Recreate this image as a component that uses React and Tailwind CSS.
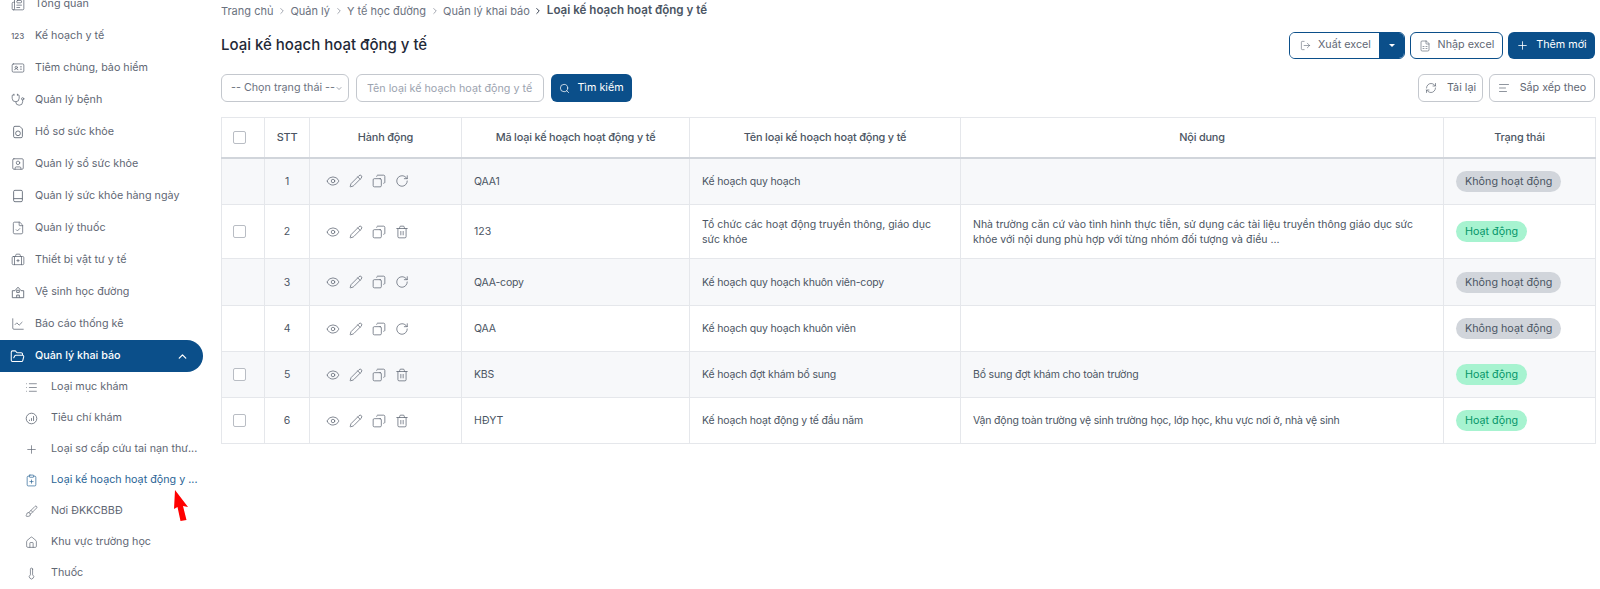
import { Stethoscope, ChevronUp, ChevronDown, ChevronRight, Plus, Search, Eye, Pencil, Copy, RotateCw, Trash2, LogOut, FileSpreadsheet, RefreshCw, AlignLeft, FolderOpen, ChartLine, BriefcaseMedical, FileCheck, SquareUser, Newspaper, List, ClipboardPlus, Brush, House, Thermometer, IdCard } from 'lucide-react'

// a few menu icons have no close match in the package
const FileCircle = ({ size }) => (
  <svg width={size} height={size} viewBox="0 0 16 16" fill="none" stroke="currentColor" strokeWidth="1" strokeLinejoin="round">
    <path d="M3 3a1.5 1.5 0 0 1 1.5-1.5H10L13 4.5V13a1.5 1.5 0 0 1-1.5 1.5h-7A1.5 1.5 0 0 1 3 13Z" />
    <circle cx="8" cy="9.5" r="2.7" />
  </svg>
)

const PlainBook = ({ size }) => (
  <svg width={size} height={size} viewBox="0 0 16 16" fill="none" stroke="currentColor" strokeWidth="1">
    <rect x="3" y="1.5" width="10" height="13" rx="1.5" />
    <path d="M3 11h10" />
  </svg>
)

const SchoolBox = ({ size }) => (
  <svg width={size} height={size} viewBox="0 0 16 16" fill="none" stroke="currentColor" strokeWidth="1" strokeLinejoin="round">
    <path d="M1.5 14.5V6.5h3M14.5 14.5V6.5h-3M4.5 6.5 8 2.5l3.5 4M1.5 14.5h13" />
    <rect x="6.5" y="6" width="3" height="2.5" />
    <path d="M6.5 14.5v-3h3v3" />
  </svg>
)

const CircleChart = ({ size }) => (
  <svg width={size} height={size} viewBox="0 0 16 16" fill="none" stroke="currentColor" strokeWidth="1">
    <circle cx="8" cy="8" r="6.5" />
    <path d="M5.5 11V9.5M8 11V7.5M10.5 11V5" />
  </svg>
)

const menu = [
  { label: 'Tổng quan', icon: Newspaper },
  { label: 'Kế hoạch y tế', text: '123' },
  { label: 'Tiêm chủng, bảo hiểm', icon: IdCard },
  { label: 'Quản lý bệnh', icon: Stethoscope },
  { label: 'Hồ sơ sức khỏe', icon: FileCircle },
  { label: 'Quản lý sổ sức khỏe', icon: SquareUser },
  { label: 'Quản lý sức khỏe hàng ngày', icon: PlainBook },
  { label: 'Quản lý thuốc', icon: FileCheck },
  { label: 'Thiết bị vật tư y tế', icon: BriefcaseMedical },
  { label: 'Vệ sinh học đường', icon: SchoolBox },
  { label: 'Báo cáo thống kê', icon: ChartLine },
]

const subMenu = [
  { label: 'Loại mục khám', icon: List },
  { label: 'Tiêu chí khám', icon: CircleChart },
  { label: 'Loại sơ cấp cứu tai nạn thư...', icon: Plus },
  { label: 'Loại kế hoạch hoạt động y ...', icon: ClipboardPlus, active: true },
  { label: 'Nơi ĐKKCBBĐ', icon: Brush },
  { label: 'Khu vực trường học', icon: House },
  { label: 'Thuốc', icon: Thermometer },
]

const rows = [
  { id: 1, ma: 'QAA1', ten: 'Kế hoạch quy hoạch', noiDung: '', on: false, h: 'h-[47px]' },
  { id: 2, ma: '123', ten: 'Tổ chức các hoạt động truyền thông, giáo dục sức khỏe', noiDung: 'Nhà trường căn cứ vào tình hình thực tiễn, sử dụng các tài liệu truyền thông giáo dục sức khỏe với nội dung phù hợp với từng nhóm đối tượng và điều ...', on: true, h: 'h-[54px] tracking-normal' },
  { id: 3, ma: 'QAA-copy', ten: 'Kế hoạch quy hoạch khuôn viên-copy', noiDung: '', on: false, h: 'h-[47px]' },
  { id: 4, ma: 'QAA', ten: 'Kế hoạch quy hoạch khuôn viên', noiDung: '', on: false, h: 'h-[46px]' },
  { id: 5, ma: 'KBS', ten: 'Kế hoạch đợt khám bổ sung', noiDung: 'Bổ sung đợt khám cho toàn trường', on: true, h: 'h-[46px]' },
  { id: 6, ma: 'HĐYT', ten: 'Kế hoạch hoạt động y tế đầu năm', noiDung: 'Vận động toàn trường vệ sinh trường học, lớp học, khu vực nơi ở, nhà vệ sinh', on: true, h: 'h-[46px]' },
]

function Sidebar() {
  return (
    <aside className="w-[203px] shrink-0 -mt-[12px] text-[10.75px] text-[#5f6774]">
      {menu.map(({ label, icon: Icon, text }) => (
        <div key={label} className="h-[32px] flex items-center pl-[11px]">
          <span className="w-[24px] shrink-0 flex items-center">
            {Icon ? <Icon size={14} strokeWidth={1.3} /> : <span className="text-[8px] font-medium">{text}</span>}
          </span>
          {label}
        </div>
      ))}
      <div className="h-[32px] flex items-center pl-[10px] pr-[14px] bg-[#0b4f8a] rounded-r-full text-white font-medium">
        <span className="w-[25px] shrink-0"><FolderOpen size={15} strokeWidth={1.7} /></span>
        <span className="flex-1">Quản lý khai báo</span>
        <ChevronUp size={13} strokeWidth={2.4} />
      </div>
      {subMenu.map(({ label, icon: Icon, active }) => (
        <div key={label} className={`h-[31px] flex items-center pl-[25px] whitespace-nowrap ${active ? 'text-[#2b6596]' : ''}`}>
          <span className="w-[26px] shrink-0"><Icon size={13} strokeWidth={1.3} /></span>
          {label}
        </div>
      ))}
    </aside>
  )
}

function Breadcrumb() {
  const items = ['Trang chủ', 'Quản lý', 'Y tế học đường', 'Quản lý khai báo']
  return (
    <div className="flex items-center h-[22px] text-[11px] text-[#6b7280]">
      {items.map((item, i) => (
        <span key={item} className="flex items-center">
          {item}
          <ChevronRight size={10} strokeWidth={i === 3 ? 2.4 : 1.5} className={`mx-[3.5px] ${i === 3 ? 'text-[#374151]' : ''}`} />
        </span>
      ))}
      <span className="text-[11.6px] font-semibold text-[#4b5563]">Loại kế hoạch hoạt động y tế</span>
    </div>
  )
}

function OutlineBtn({ icon: Icon, children, className = '' }) {
  return (
    <button className={`h-[28px] flex items-center justify-center gap-[10px] border border-[#c4c8ce] rounded-[6px] bg-white text-[#5f6774] ${className}`}>
      <Icon size={12} strokeWidth={1.4} />
      {children}
    </button>
  )
}

function Toolbar() {
  return (
    <>
      <div className="flex items-center justify-between h-[27px] mt-[10px]">
        <h1 className="text-[15px] font-medium text-[#1f2937]">Loại kế hoạch hoạt động y tế</h1>
        <div className="flex items-center gap-[5px] text-[10.75px]">
          <div className="flex h-[27px] rounded-[6px] overflow-hidden border border-[#0b4f8a]">
            <span className="w-[89px] flex items-center gap-[7px] pl-[10px] text-[#5f6774] bg-white">
              <LogOut size={11} strokeWidth={1.3} />
              Xuất excel
            </span>
            <span className="w-[25px] bg-[#0b4f8a] flex items-center justify-center">
              <span className="border-x-[3px] border-t-[3px] border-x-transparent border-t-white" />
            </span>
          </div>
          <button className="h-[27px] w-[93px] flex items-center justify-center gap-[7px] rounded-[6px] border border-[#0b4f8a] text-[#5f6774] bg-white">
            <FileSpreadsheet size={12} strokeWidth={1.3} />
            Nhập excel
          </button>
          <button className="h-[27px] w-[87px] flex items-center justify-center gap-[7px] rounded-[6px] bg-[#0b4f8a] text-white">
            <Plus size={13} strokeWidth={1.5} />
            Thêm mới
          </button>
        </div>
      </div>
      <div className="flex items-center justify-between mt-[15px] text-[10.75px]">
        <div className="flex items-center gap-[7px]">
          <div className="h-[28px] w-[128px] flex items-center justify-between pl-[9px] pr-[5px] border border-[#c4c8ce] rounded-[6px] text-[#6b7280] whitespace-nowrap">
            -- Chọn trạng thái --
            <ChevronDown size={11} strokeWidth={1.8} />
          </div>
          <input
            placeholder="Tên loại kế hoạch hoạt động y tế"
            className="h-[28px] w-[188px] px-[10px] border border-[#c4c8ce] rounded-[6px] placeholder:text-[#9ca3af] outline-none"
          />
          <button className="h-[28px] w-[81px] flex items-center justify-center gap-[7px] rounded-[6px] bg-[#0b4f8a] text-white">
            <Search size={11} strokeWidth={1.6} />
            Tìm kiếm
          </button>
        </div>
        <div className="flex items-center gap-[6px]">
          <OutlineBtn icon={RefreshCw} className="w-[65px]">Tải lại</OutlineBtn>
          <OutlineBtn icon={AlignLeft} className="w-[106px]">Sắp xếp theo</OutlineBtn>
        </div>
      </div>
    </>
  )
}

function Checkbox() {
  return <span className="block w-[13px] h-[13px] ml-[11px] border border-[#b9bdc4] rounded-[2px] bg-white" />
}

function DataTable() {
  const th = 'border-x border-[#e5e7eb] font-medium text-[#4b5563] text-center text-[10.9px]'
  const td = 'border-x border-[#e5e7eb] px-[12px]'
  return (
    <table className="mt-[15px] w-[1374px] table-fixed border-collapse text-[10.5px] tracking-[-0.18px] text-[#4b5563] leading-[15px]">
      <colgroup>
        <col className="w-[43px]" />
        <col className="w-[45px]" />
        <col className="w-[152px]" />
        <col className="w-[228px]" />
        <col className="w-[271px]" />
        <col className="w-[483px]" />
        <col className="w-[152px]" />
      </colgroup>
      <thead>
        <tr className="h-[40px] border-t border-b-2 border-t-[#e5e7eb] border-b-[#d1d5db]">
          <th className={th}><Checkbox /></th>
          <th className={th}>STT</th>
          <th className={th}>Hành động</th>
          <th className={th}>Mã loại kế hoạch hoạt động y tế</th>
          <th className={th}>Tên loại kế hoạch hoạt động y tế</th>
          <th className={th}>Nội dung</th>
          <th className={th}>Trạng thái</th>
        </tr>
      </thead>
      <tbody>
        {rows.map((r) => (
          <tr key={r.id} className={`${r.h} border-b border-[#e5e7eb] ${r.id % 2 ? 'bg-[#f7f8fa]' : 'bg-white'}`}>
            <td className="border-x border-[#e5e7eb]">{r.on && <Checkbox />}</td>
            <td className="border-x border-[#e5e7eb] text-center">{r.id}</td>
            <td className="border-x border-[#e5e7eb] pl-[16px]">
              <div className="flex items-center gap-[9px] text-[#5f6774]">
                <Eye size={14} strokeWidth={1.3} />
                <Pencil size={14} strokeWidth={1.3} />
                <Copy size={14} strokeWidth={1.3} className="-scale-x-100" />
                {r.on ? <Trash2 size={14} strokeWidth={1.3} /> : <RotateCw size={14} strokeWidth={1.3} />}
              </div>
            </td>
            <td className={td}>{r.ma}</td>
            <td className={td}>{r.ten}</td>
            <td className={td}>{r.noiDung}</td>
            <td className={td}>
              {r.on ? (
                <span className="inline-flex items-center h-[21px] px-[9px] rounded-full bg-[#a7f3d0] text-[#059669] text-[10.75px] tracking-normal">Hoạt động</span>
              ) : (
                <span className="inline-flex items-center h-[21px] px-[9px] rounded-full bg-[#d1d5db] text-[#4b5563] text-[10.75px] tracking-normal">Không hoạt động</span>
              )}
            </td>
          </tr>
        ))}
      </tbody>
    </table>
  )
}

export default function App() {
  return (
    <div className="relative flex h-[589px] overflow-hidden bg-white font-['Inter',sans-serif]">
      <Sidebar />
      <main className="flex-1 min-w-0 pl-[18px] pr-[5px]">
        <Breadcrumb />
        <Toolbar />
        <DataTable />
      </main>
      <svg className="absolute left-[172px] top-[489px]" width="18" height="34" viewBox="0 0 18 34">
        <polygon points="3,1 16,18 11,17 14.5,31 8.5,32 5.5,18 2,20" fill="#f00" />
      </svg>
    </div>
  )
}
